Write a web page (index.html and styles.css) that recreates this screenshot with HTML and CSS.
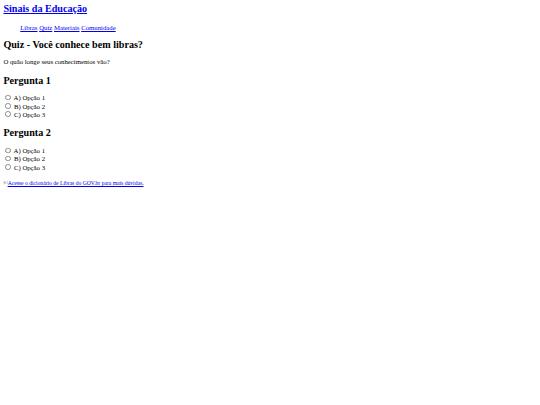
FILE: index.html
```html
<!DOCTYPE html>
<html lang="pt-BR">
<head>
<meta charset="utf-8">
<title>Sinais da Educação</title>
<link rel="stylesheet" href="styles.css">
</head>
<body class="page">
<header class="site-header">
  <h1 class="site-title"><a href="#">Sinais da Educação</a></h1>
  <nav class="site-nav">
    <ul class="nav-list">
      <li><a href="#">Libras</a></li>
      <li><a href="#">Quiz</a></li>
      <li><a href="#">Materiais</a></li>
      <li><a href="#">Comunidade</a></li>
    </ul>
  </nav>
</header>
<main>
  <section class="quiz">
    <h2 class="quiz-title">Quiz - Você conhece bem libras?</h2>
    <p class="quiz-intro">O quão longe seus conhecimentos vão?</p>
    <form class="quiz-form">
      <h2 class="question">Pergunta 1</h2>
      <label class="option"><input class="radio" type="radio" name="q1"> A) Opção 1</label><br>
      <label class="option"><input class="radio" type="radio" name="q1"> B) Opção 2</label><br>
      <label class="option"><input class="radio" type="radio" name="q1"> C) Opção 3</label><br>
      <h2 class="question">Pergunta 2</h2>
      <label class="option"><input class="radio" type="radio" name="q2"> A) Opção 1</label><br>
      <label class="option"><input class="radio" type="radio" name="q2"> B) Opção 2</label><br>
      <label class="option"><input class="radio" type="radio" name="q2"> C) Opção 3</label><br>
    </form>
  </section>
</main>
<footer class="site-footer">
  <small class="footer-note">©<a href="#">Acesse o dicionário de Libras do GOV.br para mais dúvidas.</a></small>
</footer>
</body>
</html>
```
FILE: styles.css
```css
.page {
  margin: 3.375px;
  font-family: "Liberation Serif", "Times New Roman", serif;
  font-size: 6.75px;
  line-height: 1.2;
  color: #000;
  background: #fff;
}
.page a { color: #0000ee; }
.site-title {
  font-size: 10.125px;
  line-height: 1.2;
  margin: 0 0 8.55px;
}
.nav-list {
  list-style: none;
  margin: 6.75px 0;
  padding-left: 16.875px;
}
.nav-list li { display: inline; }
.quiz-title {
  font-size: 10.125px;
  line-height: 1.2;
  margin: 6.9px 0;
}
.quiz-intro { margin: 6.75px 0; }
.quiz-form { line-height: 8.3px; }
.question {
  font-size: 10.125px;
  line-height: 1.2;
  margin: 8.4px 0 7.5px;
}
.radio {
  -webkit-appearance: none;
  appearance: none;
  box-sizing: border-box;
  width: 5.5px;
  height: 5.5px;
  margin: 0 1.27px 0 2.11px;
  border: 0.5px solid #8a8a8a;
  border-radius: 50%;
  background: #fff;
  vertical-align: baseline;
}
.site-footer { margin-top: 6.75px; }
.footer-note { font-size: 5.625px; }
```
